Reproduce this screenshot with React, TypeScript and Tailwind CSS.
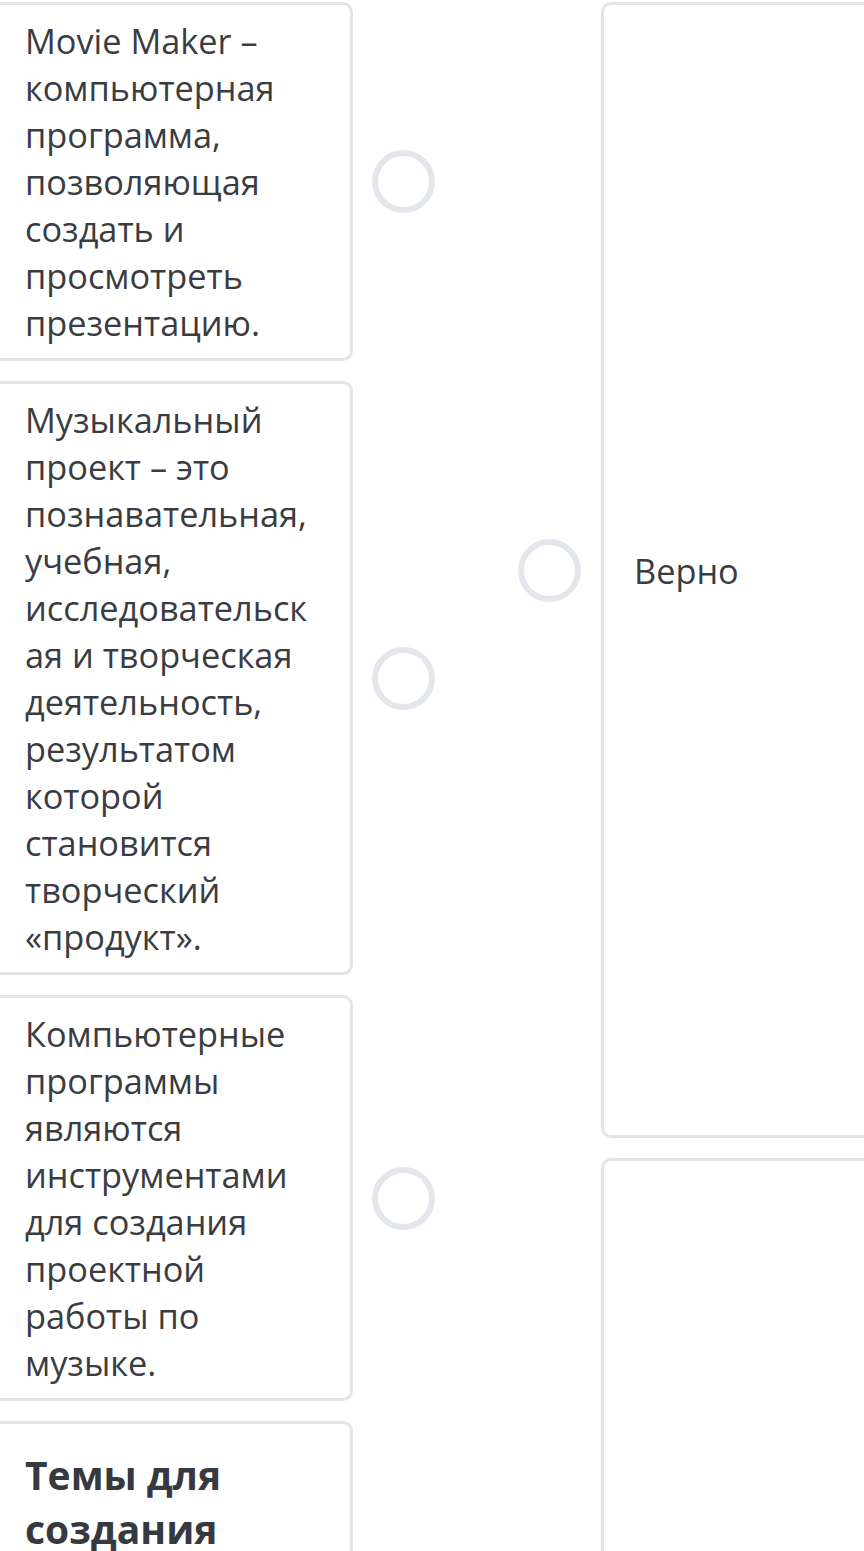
import * as React from "react";

function Radio() {
  return (
    <div className="w-[63px] h-[63px] shrink-0 rounded-full border-[6px] border-[#e3e7eb] bg-white" />
  );
}

interface CardProps {
  children: React.ReactNode;
  className?: string;
}

function LeftCard({ children, className }: CardProps) {
  return (
    <div
      className={
        "w-[361px] shrink-0 rounded-[10px] border-[3px] border-[#e2e5e7] bg-white pl-[30px] pr-[30px] " +
        (className ?? "")
      }
    >
      {children}
    </div>
  );
}

const items = [
  "Movie Maker – компьютерная программа, позволяющая создать и просмотреть презентацию.",
  "Музыкальный проект – это познавательная, учебная, исследовательская и творческая деятельность, результатом которой становится творческий «продукт».",
  "Компьютерные программы являются инструментами для создания проектной работы по музыке.",
];

export default function App() {
  return (
    <div className="w-[864px] h-[1551px] overflow-hidden bg-white flex font-['Open_Sans',sans-serif] text-[#3a3c41]">
      <div className="-ml-2 pt-[2px] flex flex-col gap-[20px]">
        {items.map((t) => (
          <div key={t} className="flex items-center gap-[19px]">
            <LeftCard className="pt-[12px] pb-[12px]">
              <p className="text-[34.3px] leading-[47px] break-words">{t}</p>
            </LeftCard>
            <Radio />
          </div>
        ))}
        <div className="flex items-start gap-[19px]">
          <LeftCard className="pt-[24px] pb-[30px]">
            <p className="text-[39px] leading-[54px] font-bold text-[#363940]">
              Темы для создания музыкального проекта
            </p>
          </LeftCard>
        </div>
      </div>

      <div className="ml-[83px] pt-[2px] flex flex-col gap-[20px]">
        <div className="flex items-center gap-[20px]">
          <Radio />
          <div className="w-[300px] h-[1136px] rounded-[10px] border-[3px] border-[#e2e5e7] bg-white flex items-center pl-[30px]">
            <span className="text-[34.3px] leading-[47px]">Верно</span>
          </div>
        </div>
        <div className="flex items-center gap-[20px]">
          <Radio />
          <div className="w-[300px] h-[1000px] rounded-[10px] border-[3px] border-[#e2e5e7] bg-white" />
        </div>
      </div>
    </div>
  );
}
